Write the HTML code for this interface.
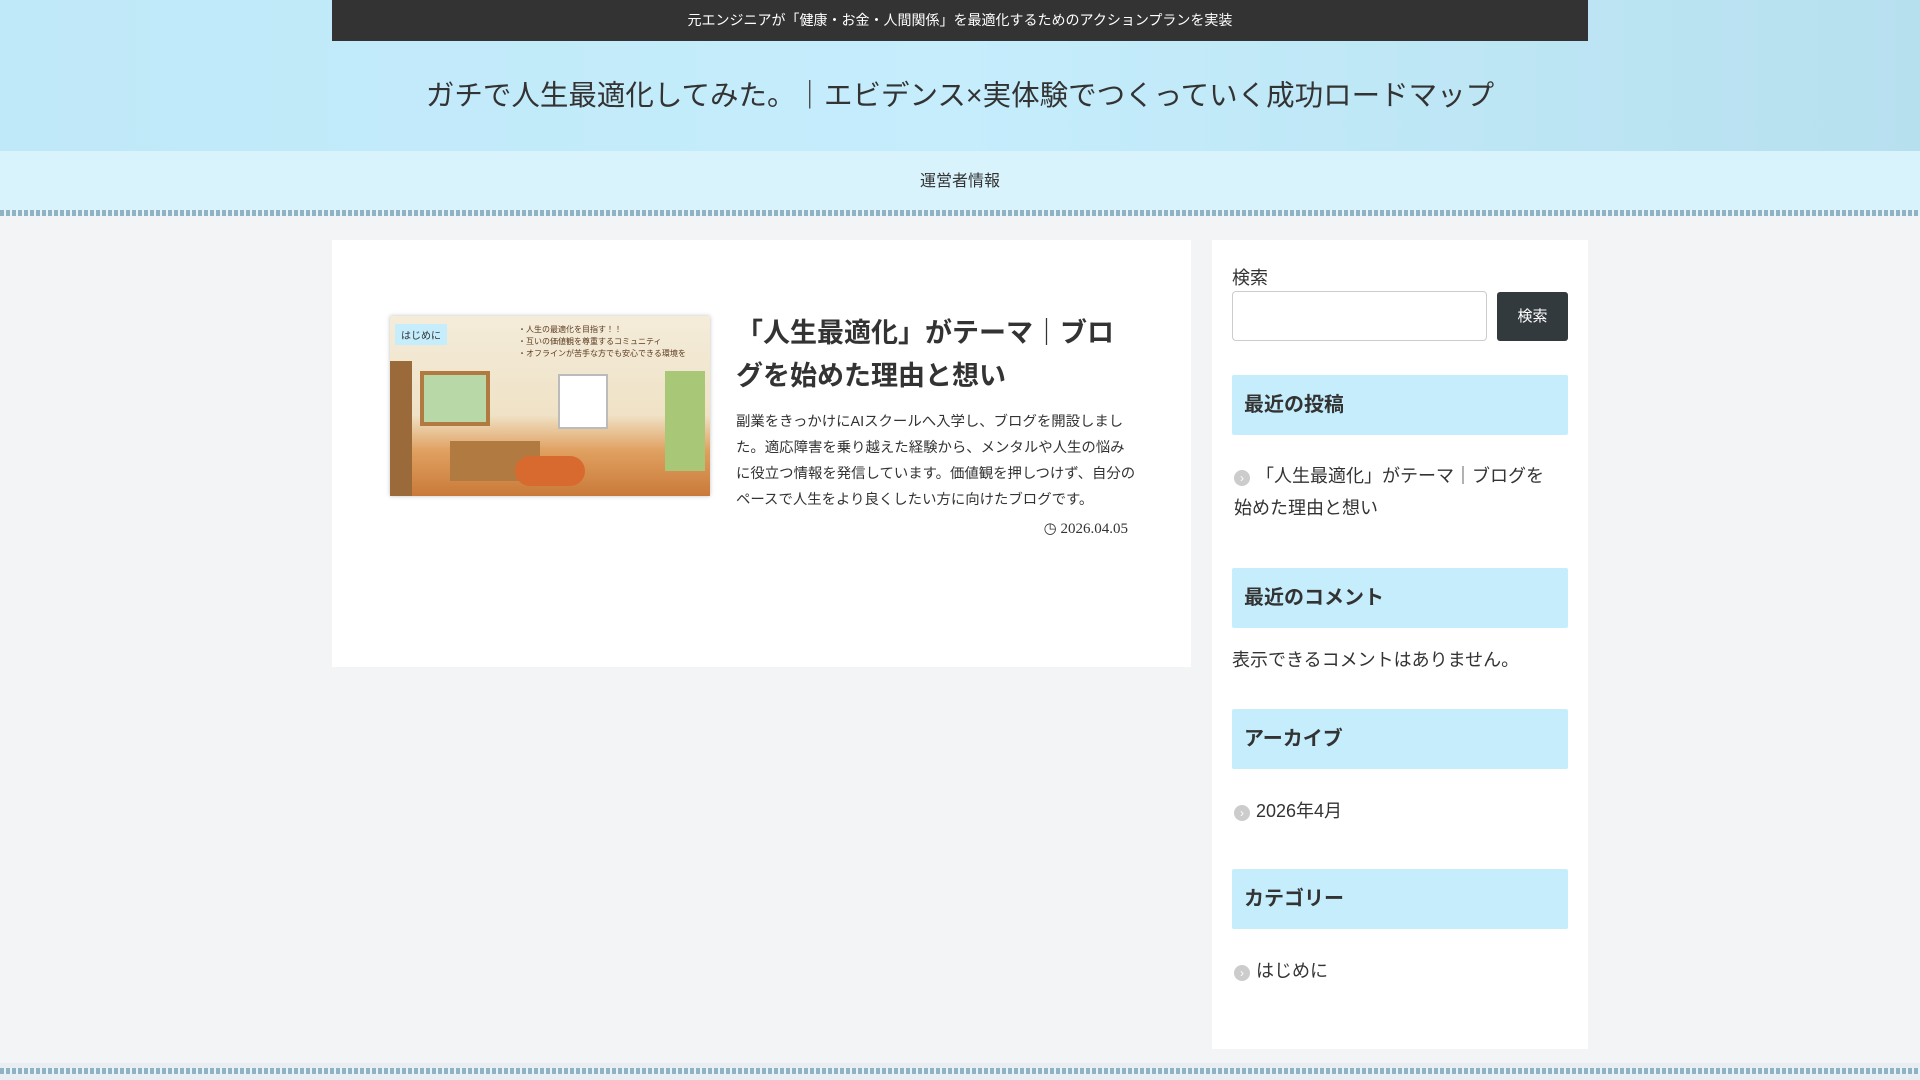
<!DOCTYPE html>
<html><head><meta charset="utf-8"><style>
*{box-sizing:border-box;margin:0;padding:0}
body{width:1920px;height:1080px;overflow:hidden;background:#f3f4f5;font-family:"Liberation Sans","Noto Sans CJK JP",sans-serif;color:#333;position:relative}
.hdr{position:absolute;left:0;top:0;width:1920px;height:151px;background:linear-gradient(90deg,#bfe8f8,#c5edfc 50%,#b7e0ef)}
.topbar{position:absolute;left:332px;top:0;width:1256px;height:41px;background:#333;color:#fff;font-size:14px;text-align:center;line-height:41px}
.title{position:absolute;left:0;width:1920px;top:75px;text-align:center;font-size:28.5px;color:#333;line-height:42px}
.nav{position:absolute;left:0;top:151px;width:1920px;height:61px;background:#d9f3fd;text-align:center;font-size:16px;line-height:62px}
.dash{position:absolute;left:0;width:1920px;height:6px;background:repeating-linear-gradient(90deg,#8fb3c4 0 4px,#e6f4fa 4px 6px)}
.card{position:absolute;left:332px;top:240px;width:859px;height:427px;background:#fff}
.img{position:absolute;left:390px;top:316px;width:320px;height:180px;box-shadow:0 0 4px rgba(0,0,0,.25);background:#f2ead8;overflow:hidden}
.side{position:absolute;left:1212px;top:240px;width:376px;height:809px;background:#fff}
.h{position:absolute;left:20px;width:336px;height:60px;background:#c5edfc;border-radius:2px;font-size:20px;font-weight:bold;line-height:60px;padding-left:12px}
.li{position:absolute;left:22px;font-size:18px;line-height:32px;color:#333}
.dot{display:inline-block;width:16px;height:16px;border-radius:50%;background:#ccc;color:#fff;font-size:12px;line-height:16px;text-align:center;margin-right:6px;vertical-align:0}
</style></head><body>
<div class="hdr"></div>
<div class="topbar">元エンジニアが「健康・お金・人間関係」を最適化するためのアクションプランを実装</div>
<div class="title">ガチで人生最適化してみた。｜エビデンス×実体験でつくっていく成功ロードマップ</div>
<div class="nav">運営者情報</div>
<div class="dash" style="top:210px"></div>
<div class="card"></div>
<div class="img">
 <div style="position:absolute;left:0;top:0;width:320px;height:180px;background:linear-gradient(180deg,#f4ecda 0,#efe2c6 55%,#e0a060 75%,#c97a3a 100%)"></div>
 <div style="position:absolute;left:30px;top:55px;width:70px;height:55px;background:#b9d8a8;border:4px solid #b07a40"></div>
 <div style="position:absolute;left:0;top:45px;width:22px;height:135px;background:#9a6a3a"></div>
 <div style="position:absolute;left:168px;top:58px;width:50px;height:55px;background:#fff;border:2px solid #bbb"></div>
 <div style="position:absolute;left:275px;top:55px;width:40px;height:100px;background:#a8c878"></div>
 <div style="position:absolute;left:60px;top:125px;width:90px;height:40px;background:#b07a40"></div>
 <div style="position:absolute;left:125px;top:140px;width:70px;height:30px;background:#d86a30;border-radius:20px"></div>
 <div style="position:absolute;left:5px;top:8px;background:#c5edfc;font-size:10px;padding:3px 6px;color:#333">はじめに</div>
 <div style="position:absolute;left:128px;top:8px;font-size:8px;line-height:12px;color:#5a3a20">・人生の最適化を目指す！！<br>・互いの価値観を尊重するコミュニティ<br>・オフラインが苦手な方でも安心できる環境を</div>
</div>
<div style="position:absolute;left:736px;top:312px;width:400px;font-size:27px;font-weight:bold;line-height:43px">「人生最適化」がテーマ｜ブログを始めた理由と想い</div>
<div style="position:absolute;left:736px;top:409px;width:400px;font-size:14.4px;line-height:26px;color:#333">副業をきっかけにAIスクールへ入学し、ブログを開設しました。適応障害を乗り越えた経験から、メンタルや人生の悩みに役立つ情報を発信しています。価値観を押しつけず、自分のペースで人生をより良くしたい方に向けたブログです。</div>
<div style="position:absolute;left:900px;width:228px;top:519px;text-align:right;font-size:15px;font-family:'Liberation Serif',serif">&#9719; 2026.04.05</div>
<div class="side">
 <div style="position:absolute;left:20px;top:24px;font-size:18px">検索</div>
 <div style="position:absolute;left:20px;top:51px;width:255px;height:50px;border:1px solid #ccc;border-radius:4px"></div>
 <div style="position:absolute;left:285px;top:52px;width:71px;height:49px;background:#333a3e;border-radius:3px;color:#fff;font-size:15px;text-align:center;line-height:49px">検索</div>
 <div class="h" style="top:135px">最近の投稿</div>
 <div class="li" style="top:220px;width:318px"><span class="dot">›</span>「人生最適化」がテーマ｜ブログを始めた理由と想い</div>
 <div class="h" style="top:328px">最近のコメント</div>
 <div style="position:absolute;left:20px;top:406px;font-size:18px">表示できるコメントはありません。</div>
 <div class="h" style="top:469px">アーカイブ</div>
 <div class="li" style="top:555px"><span class="dot">›</span>2026年4月</div>
 <div class="h" style="top:629px">カテゴリー</div>
 <div class="li" style="top:715px"><span class="dot">›</span>はじめに</div>
</div>
<div style="position:absolute;left:0;top:1063px;width:1920px;height:17px;background:#e8eef1"></div>
<div class="dash" style="top:1068px"></div>
</body></html>
